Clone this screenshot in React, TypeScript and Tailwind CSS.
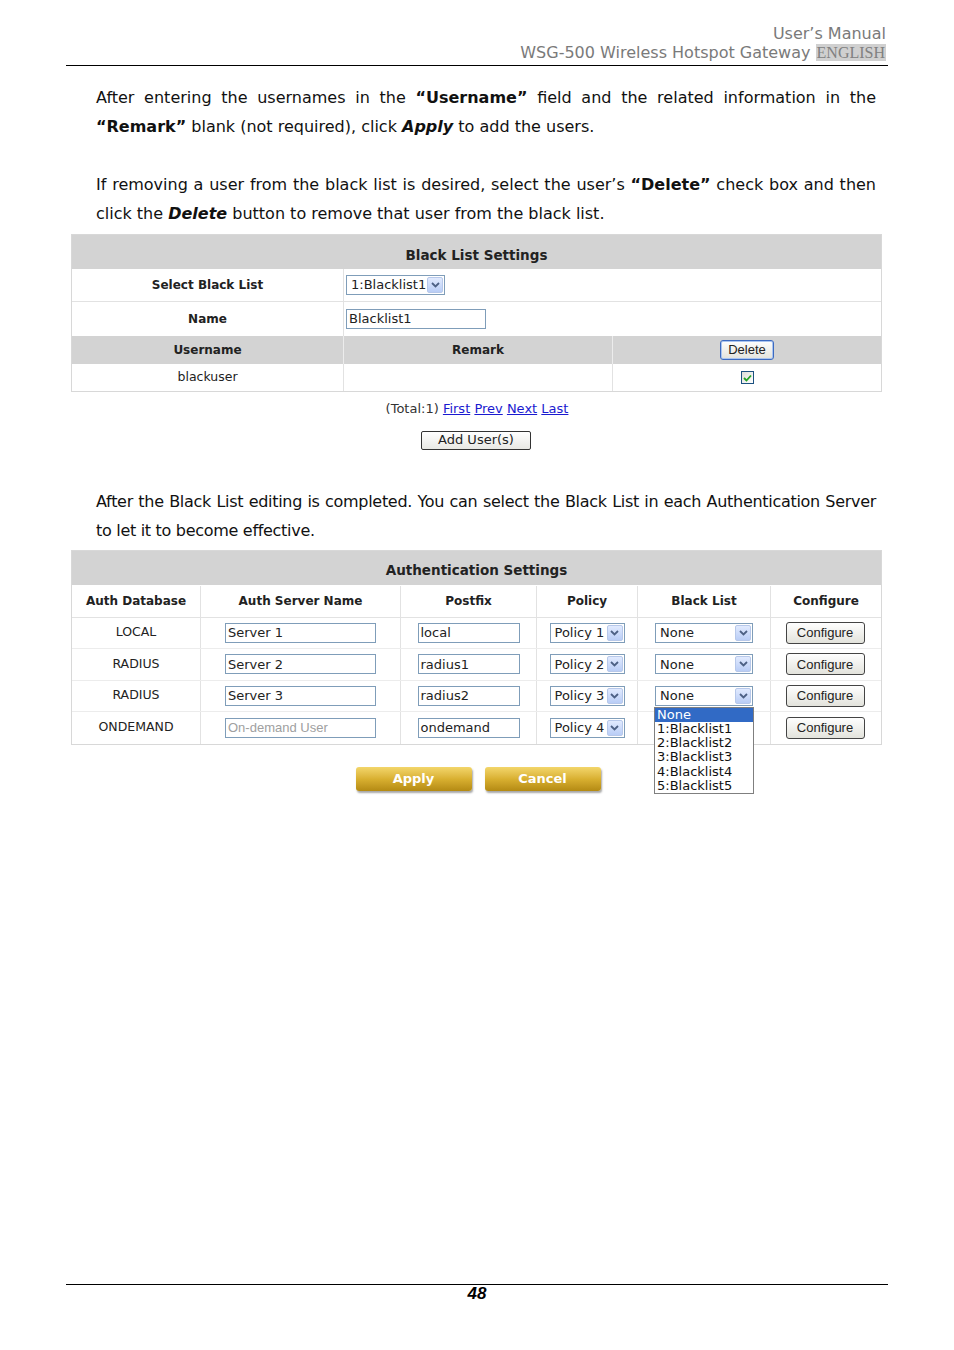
import React from 'react';

const body = { fontFamily: '"DejaVu Sans", Verdana, sans-serif' };
const ui = { fontFamily: '"DejaVu Sans", Tahoma, sans-serif' };
const arial = { fontFamily: '"Liberation Sans", Arial, sans-serif' };

const Chevron = () => (
  <span className="flex h-[16px] w-[16px] items-center justify-center rounded-[2px] border border-[#b7c8ea] bg-gradient-to-b from-[#e1eafe] to-[#b9cdf6]">
    <svg width="9" height="6" viewBox="0 0 9 6">
      <path d="M1 1 L4.5 4.5 L8 1" fill="none" stroke="#4d6185" strokeWidth="1.8" />
    </svg>
  </span>
);

const Select = ({ value, width }: { value: string; width: string }) => (
  <div className={`flex h-[20px] items-center justify-between border border-[#7f9db9] bg-white pl-[4px] pr-[1px] text-[13px] text-[#222] ${width}`} style={ui}>
    <span>{value}</span>
    <Chevron />
  </div>
);

const TextBox = ({ value, width, muted }: { value: string; width: string; muted?: boolean }) => (
  <div
    className={`flex h-[20px] items-center border border-[#7f9db9] bg-white px-[2px] text-[13px] ${muted ? 'text-[#a0a0a0]' : 'text-[#222]'} ${width}`}
    style={muted ? arial : ui}
  >
    {value}
  </div>
);

const GrayButton = ({ label, className }: { label: string; className: string }) => (
  <div
    className={`flex items-center justify-center rounded-[3px] border border-[#003c74] bg-gradient-to-b from-[#fefefe] to-[#e3e3dc] text-[13px] text-[#222] ${className}`}
    style={arial}
  >
    {label}
  </div>
);

const GoldButton = ({ label }: { label: string }) => (
  <div
    className="flex h-[24px] w-[116px] items-center justify-center rounded-[3px] bg-gradient-to-b from-[#f3d66a] via-[#d9b030] to-[#b48a12] text-[13px] font-bold text-white shadow-[1px_2px_2px_rgba(0,0,0,0.35)]"
    style={ui}
  >
    {label}
  </div>
);

const authRows = [
  { db: 'LOCAL', name: 'Server 1', postfix: 'local', policy: 'Policy 1' },
  { db: 'RADIUS', name: 'Server 2', postfix: 'radius1', policy: 'Policy 2' },
  { db: 'RADIUS', name: 'Server 3', postfix: 'radius2', policy: 'Policy 3', open: true },
  { db: 'ONDEMAND', name: 'On-demand User', postfix: 'ondemand', policy: 'Policy 4', muted: true },
];

const options = ['None', '1:Blacklist1', '2:Blacklist2', '3:Blacklist3', '4:Blacklist4', '5:Blacklist5'];

export default function App() {
  return (
    <div className="relative h-[1350px] w-[954px] bg-white text-[#111]">
      <div className="mx-[66px]">
        {/* header */}
        <div className="border-b border-black pb-[3px] pr-[2px] pt-[24px] text-right text-[16px] leading-[19px] text-[#7a7a7a]" style={body}>
          <div>User’s Manual</div>
          <div>
            WSG-500 Wireless Hotspot Gateway{' '}
            <span className="bg-[#d0d0d0] px-[1px] text-[#808080]" style={{ fontFamily: '"Liberation Serif", "Times New Roman", serif' }}>
              ENGLISH
            </span>
          </div>
        </div>

        <div className="pl-[30px] pr-[12px] text-[16px] leading-[29px]" style={body}>
          <p className="mt-[17px] text-justify">
            After entering the usernames in the <b>“Username”</b> field and the related information in the <b>“Remark”</b> blank (not required), click <b><i>Apply</i></b> to add the users.
          </p>
          <p className="mt-[29px] text-justify">
            If removing a user from the black list is desired, select the user’s <b>“Delete”</b> check box and then click the <b><i>Delete</i></b> button to remove that user from the black list.
          </p>
        </div>

        {/* Black list table */}
        <div className="ml-[5px] mt-[6px] w-[811px] border border-[#d8d8d8] text-[12.5px]" style={ui}>
          <div className="flex h-[34px] items-center justify-center bg-[#d3d3d3] pt-[6px] text-[13.5px] font-bold text-[#222]">Black List Settings</div>
          <div className="grid h-[33px] grid-cols-[272px_1fr] border-b border-[#e2e2e2]">
            <div className="flex items-center justify-center border-r border-[#e2e2e2] text-[12px] font-bold text-[#222]">Select Black List</div>
            <div className="flex items-center pl-[2px]">
              <Select value="1:Blacklist1" width="w-[99px]" />
            </div>
          </div>
          <div className="grid h-[34px] grid-cols-[272px_1fr]">
            <div className="flex items-center justify-center border-r border-[#e2e2e2] text-[12px] font-bold text-[#222]">Name</div>
            <div className="flex items-center pl-[2px]">
              <TextBox value="Blacklist1" width="w-[140px]" />
            </div>
          </div>
          <div className="grid h-[28px] grid-cols-[272px_269px_1fr] bg-[#d3d3d3] text-[12px]">
            <div className="flex items-center justify-center border-r border-[#ececec] font-bold text-[#222]">Username</div>
            <div className="flex items-center justify-center border-r border-[#ececec] font-bold text-[#222]">Remark</div>
            <div className="flex items-center justify-center">
              <GrayButton label="Delete" className="h-[20px] w-[54px] border-[#3c6ac0] shadow-[inset_0_0_0_1px_#a9c4f0]" />
            </div>
          </div>
          <div className="grid h-[27px] grid-cols-[272px_269px_1fr]">
            <div className="flex items-center justify-center border-r border-[#e2e2e2] text-[#222]">blackuser</div>
            <div className="border-r border-[#e2e2e2]" />
            <div className="flex items-center justify-center">
              <span className="flex h-[13px] w-[13px] items-center justify-center border border-[#1c5180] bg-gradient-to-br from-[#dcdcd6] to-white">
                <svg width="9" height="8" viewBox="0 0 9 8">
                  <path d="M1 4 L3.5 6.5 L8 1.5" fill="none" stroke="#21a121" strokeWidth="1.8" />
                </svg>
              </span>
            </div>
          </div>
        </div>

        <div className="mt-[7px] text-center text-[13px] text-[#333]" style={ui}>
          (Total:1){' '}
          <span className="text-[#1a1ad0] underline">First</span> <span className="text-[#1a1ad0] underline">Prev</span>{' '}
          <span className="text-[#1a1ad0] underline">Next</span> <span className="text-[#1a1ad0] underline">Last</span>
        </div>
        <div className="mt-[12px] flex justify-center pr-[2px]">
          <div
            className="flex h-[19px] w-[110px] items-center justify-center rounded-[2px] border border-[#333] bg-gradient-to-b from-white to-[#e8e8e4] text-[13px] text-[#222]"
            style={ui}
          >
            Add User(s)
          </div>
        </div>

        <div className="pl-[30px] pr-[12px] text-[16px] leading-[29px]" style={body}>
          <p className="mt-[37px] text-justify tracking-[-0.3px]">
            After the Black List editing is completed. You can select the Black List in each Authentication Server to let it to become effective.
          </p>
        </div>

        {/* Authentication table */}
        <div className="ml-[5px] mt-[5px] w-[811px] border border-[#d8d8d8] text-[12.5px]" style={ui}>
          <div className="flex h-[34px] items-center justify-center bg-[#d3d3d3] pt-[6px] text-[13.5px] font-bold text-[#222]">Authentication Settings</div>
          <div className="grid h-[33px] grid-cols-[129px_200px_136px_101px_133px_1fr] border-b border-[#e2e2e2] pt-[1px] text-[12px] font-bold text-[#222]">
            {['Auth Database', 'Auth Server Name', 'Postfix', 'Policy', 'Black List', 'Configure'].map((h, i) => (
              <div key={h} className={`flex items-center justify-center ${i < 5 ? 'border-r border-[#e2e2e2]' : ''}`}>
                {h}
              </div>
            ))}
          </div>
          {authRows.map((r, idx) => (
            <div
              key={r.policy}
              className={`grid h-[31.5px] grid-cols-[129px_200px_136px_101px_133px_1fr] ${idx < 3 ? 'border-b border-[#ececec]' : ''}`}
            >
              <div className="flex items-center justify-center border-r border-[#e2e2e2] text-[#222]">{r.db}</div>
              <div className="flex items-center justify-center border-r border-[#e2e2e2]">
                <TextBox value={r.name} width="w-[151px]" muted={r.muted} />
              </div>
              <div className="flex items-center justify-center border-r border-[#e2e2e2]">
                <TextBox value={r.postfix} width="w-[102px]" />
              </div>
              <div className="flex items-center justify-center border-r border-[#e2e2e2]">
                <Select value={r.policy} width="w-[75px]" />
              </div>
              <div className="relative flex items-center justify-center border-r border-[#e2e2e2]">
                <Select value="None" width="w-[98px]" />
                {r.open && (
                  <div className="absolute left-[16px] top-[26px] z-10 w-[100px] border border-[#7f7f7f] bg-white text-[13px] leading-[14.3px] text-[#111]">
                    {options.map((o, i) => (
                      <div key={o} className={`pl-[2px] ${i === 0 ? 'bg-[#316ac5] text-white' : ''}`}>
                        {o}
                      </div>
                    ))}
                  </div>
                )}
              </div>
              <div className="flex items-center justify-center pr-[2px]">
                <GrayButton label="Configure" className="h-[22px] w-[79px] border-[#444]" />
              </div>
            </div>
          ))}
        </div>

        <div className="mt-[22px] flex justify-center gap-[13px] pl-[2px]">
          <GoldButton label="Apply" />
          <GoldButton label="Cancel" />
        </div>
      </div>

      {/* footer */}
      <div className="absolute left-[66px] top-[1284px] w-[822px] border-t border-black text-center">
        <span className="block pt-[1px] text-[17px] font-bold italic leading-[16px] text-black" style={arial}>
          48
        </span>
      </div>
    </div>
  );
}
